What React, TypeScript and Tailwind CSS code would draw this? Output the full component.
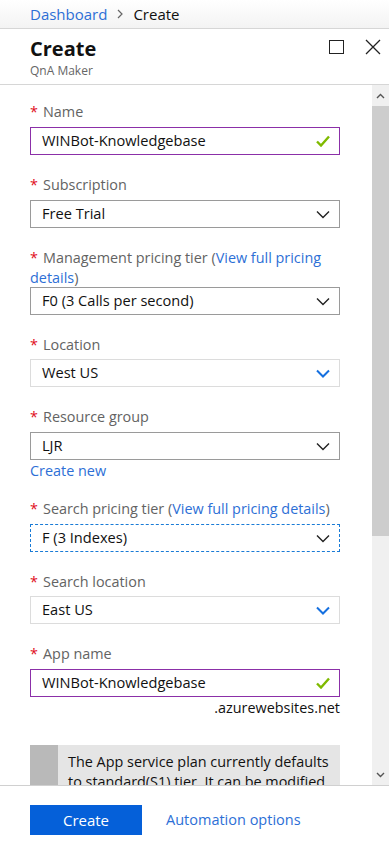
import React from 'react';

const font = { fontFamily: '"Open Sans", "Noto Sans", sans-serif' };

function Chevron({ blue }: { blue?: boolean }) {
  return (
    <svg width="14" height="9" viewBox="0 0 14 9" className="shrink-0">
      <path
        d="M1 1.5 L7 7.5 L13 1.5"
        fill="none"
        stroke={blue ? '#1570e0' : '#222'}
        strokeWidth={blue ? 2 : 1.4}
      />
    </svg>
  );
}

function Check() {
  return (
    <svg width="14" height="12" viewBox="0 0 14 12" className="shrink-0">
      <path d="M1 6.5 L5 10.5 L13 1.5" fill="none" stroke="#7fba00" strokeWidth="2.4" />
    </svg>
  );
}

function Label({ children }: { children: React.ReactNode }) {
  return (
    <div className="flex text-[14.4px] leading-[20px] text-[#636363]">
      <span className="w-[13px] shrink-0 text-[#e00b1c]">*</span>
      <span>{children}</span>
    </div>
  );
}

type Kind = 'valid' | 'select' | 'light' | 'focus';

function Box({ value, kind }: { value: string; kind: Kind }) {
  const border =
    kind === 'valid'
      ? 'border border-[#8b2fa8]'
      : kind === 'light'
        ? 'border border-[#dcdcdc]'
        : kind === 'focus'
          ? 'border border-dashed border-[#1a7bd6]'
          : 'border border-[#9a9a9a]';
  return (
    <div className={`flex h-[28px] w-[310px] items-center justify-between pl-[11px] pr-[6px] ${border}`}>
      <span className="text-[14.6px] text-[#111]">{value}</span>
      <span className="flex w-[20px] justify-center">
        {kind === 'valid' ? <Check /> : <Chevron blue={kind === 'light'} />}
      </span>
    </div>
  );
}

function Link({ children }: { children: React.ReactNode }) {
  return <span className="text-[#2d6fd6]">{children}</span>;
}

export default function App() {
  return (
    <div style={font} className="flex h-[851px] w-[389px] flex-col overflow-hidden bg-white">
      {/* breadcrumb */}
      <div className="flex h-[29px] shrink-0 items-center gap-[9px] border-b border-[#d6d6d6] bg-gradient-to-b from-white to-[#f3f3f3] pl-[30px] text-[15px]">
        <span className="text-[#2d6fd6]">Dashboard</span>
        <svg width="8" height="10" viewBox="0 0 8 10">
          <path d="M2 1 L6 5 L2 9" fill="none" stroke="#666" strokeWidth="1.2" />
        </svg>
        <span className="text-[#111]">Create</span>
      </div>

      {/* header */}
      <div className="flex h-[56px] shrink-0 items-start justify-between border-b border-[#d6d6d6] pl-[30px] pr-[8px]">
        <div className="pt-[6px]">
          <div className="text-[20px] font-bold leading-[28px] text-[#111]">Create</div>
          <div className="text-[12px] leading-[16px] text-[#666]">QnA Maker</div>
        </div>
        <div className="flex items-center gap-[21px] pt-[10px]">
          <div className="h-[14px] w-[15px] border border-[#222]" />
          <svg width="16" height="16" viewBox="0 0 16 16">
            <path d="M1 1 L15 15 M15 1 L1 15" stroke="#222" strokeWidth="1.3" />
          </svg>
        </div>
      </div>

      {/* scroll region */}
      <div className="flex min-h-0 flex-1">
        <div className="flex-1 overflow-hidden pl-[30px] pt-[17px]">
          <div className="mb-[20px]">
            <Label>Name</Label>
            <div className="mt-[5px]">
              <Box value="WINBot-Knowledgebase" kind="valid" />
            </div>
          </div>

          <div className="mb-[20px]">
            <Label>Subscription</Label>
            <div className="mt-[5px]">
              <Box value="Free Trial" kind="select" />
            </div>
          </div>

          <div className="mb-[20px]">
            <div className="w-[310px] text-[14.4px] leading-[20px] text-[#636363]">
              <span className="inline-block w-[13px] text-[#e00b1c]">*</span>Management pricing tier (
              <Link>View full pricing details</Link>)
            </div>
            <div className="-mt-[1px]">
              <Box value="F0 (3 Calls per second)" kind="select" />
            </div>
          </div>

          <div className="mb-[20px]">
            <Label>Location</Label>
            <div className="mt-[4px]">
              <Box value="West US" kind="light" />
            </div>
          </div>

          <div className="mb-[18px]">
            <Label>Resource group</Label>
            <div className="mt-[5px]">
              <Box value="LJR" kind="select" />
            </div>
            <div className="mt-[1px] text-[14.4px] leading-[20px]">
              <Link>Create new</Link>
            </div>
          </div>

          <div className="mb-[20px]">
            <Label>
              Search pricing tier (<Link>View full pricing details</Link>)
            </Label>
            <div className="mt-[5px]">
              <Box value="F (3 Indexes)" kind="focus" />
            </div>
          </div>

          <div className="mb-[20px]">
            <Label>Search location</Label>
            <div className="mt-[4px]">
              <Box value="East US" kind="light" />
            </div>
          </div>

          <div>
            <Label>App name</Label>
            <div className="mt-[5px]">
              <Box value="WINBot-Knowledgebase" kind="valid" />
            </div>
            <div className="w-[310px] text-right text-[14.4px] leading-[22px] text-[#111]">.azurewebsites.net</div>
          </div>

          <div className="mt-[26px] flex w-[310px] bg-[#e5e5e5]">
            <div className="w-[28px] shrink-0 bg-[#b9b9b9]" />
            <div className="px-[10px] py-[7px] text-[14.4px] leading-[20px] text-[#111]">
              The App service plan currently defaults to standard(S1) tier. It can be modified later.
            </div>
          </div>
        </div>

        {/* scrollbar */}
        <div className="flex w-[17px] shrink-0 flex-col bg-[#f0f0f0]">
          <div className="flex h-[21px] items-center justify-center">
            <svg width="9" height="6" viewBox="0 0 9 6">
              <path d="M1 5 L4.5 1.5 L8 5" fill="none" stroke="#555" strokeWidth="1.4" />
            </svg>
          </div>
          <div className="h-[430px] bg-[#cdcdcd]" />
          <div className="flex-1" />
          <div className="flex h-[21px] items-center justify-center">
            <svg width="9" height="6" viewBox="0 0 9 6">
              <path d="M1 1 L4.5 4.5 L8 1" fill="none" stroke="#555" strokeWidth="1.4" />
            </svg>
          </div>
        </div>
      </div>

      {/* footer */}
      <div className="flex h-[66px] shrink-0 items-start gap-[24px] border-t border-[#d0d0d0] pl-[30px] pt-[19px]">
        <div className="flex h-[30px] w-[112px] items-center justify-center bg-[#0560d9] text-[15px] text-white">
          Create
        </div>
        <div className="pt-[4px] text-[14.5px] leading-[22px] text-[#2d6fd6]">Automation options</div>
      </div>
    </div>
  );
}
